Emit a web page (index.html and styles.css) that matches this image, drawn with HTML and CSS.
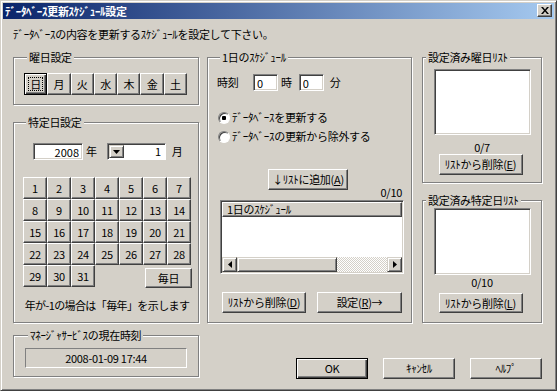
FILE: index.html
```html
<!DOCTYPE html>
<html lang="ja">
<head>
    <meta charset="UTF-8">
    <title>ﾃﾞｰﾀﾍﾞｰｽ更新ｽｹｼﾞｭｰﾙ設定</title>
    <link rel="stylesheet" href="styles.css">
</head>
<body>
    <div class="window">
        <div class="titlebar">
            <span class="title">ﾃﾞｰﾀﾍﾞｰｽ更新ｽｹｼﾞｭｰﾙ設定</span>
            <button class="btn close-btn">
                <svg width="8" height="7" viewBox="0 0 8 7"><path d="M0 0h2l2 2.4L6 0h2L5 3.5 8 7H6L4 4.6 2 7H0l3-3.5z" fill="#000"/></svg>
            </button>
        </div>
        <div class="client">
            <p class="desc">ﾃﾞｰﾀﾍﾞｰｽの内容を更新するｽｹｼﾞｭｰﾙを設定して下さい。</p>
            <div class="layout">
                <div class="col-left">
                    <fieldset class="group group-week">
                        <legend>曜日設定</legend>
                        <div class="week-buttons">
                            <button class="btn btn-default is-focused">日</button>
                            <button class="btn">月</button>
                            <button class="btn">火</button>
                            <button class="btn">水</button>
                            <button class="btn">木</button>
                            <button class="btn">金</button>
                            <button class="btn">土</button>
                        </div>
                    </fieldset>
                    <fieldset class="group group-date">
                        <legend>特定日設定</legend>
                        <div class="date-row">
                            <input class="field year-field" type="text" value="2008">
                            <span class="unit unit-year">年</span>
                            <div class="combo">
                                <span class="combo-arrow">
                                    <svg width="7" height="4" viewBox="0 0 7 4"><path d="M0 0h7L3.5 4z" fill="#000"/></svg>
                                </span>
                                <span class="combo-value">1</span>
                            </div>
                            <span class="unit unit-month">月</span>
                        </div>
                        <div class="calendar">
                            <button class="btn">1</button>
                            <button class="btn">2</button>
                            <button class="btn">3</button>
                            <button class="btn">4</button>
                            <button class="btn">5</button>
                            <button class="btn">6</button>
                            <button class="btn">7</button>
                            <button class="btn">8</button>
                            <button class="btn">9</button>
                            <button class="btn">10</button>
                            <button class="btn">11</button>
                            <button class="btn">12</button>
                            <button class="btn">13</button>
                            <button class="btn">14</button>
                            <button class="btn">15</button>
                            <button class="btn">16</button>
                            <button class="btn">17</button>
                            <button class="btn">18</button>
                            <button class="btn">19</button>
                            <button class="btn">20</button>
                            <button class="btn">21</button>
                            <button class="btn">22</button>
                            <button class="btn">23</button>
                            <button class="btn">24</button>
                            <button class="btn">25</button>
                            <button class="btn">26</button>
                            <button class="btn">27</button>
                            <button class="btn">28</button>
                            <button class="btn">29</button>
                            <button class="btn">30</button>
                            <button class="btn">31</button>
                            <button class="btn everyday-btn">毎日</button>
                        </div>
                        <p class="note">年が-1の場合は「毎年」を示します</p>
                    </fieldset>
                    <fieldset class="group group-clock">
                        <legend>ﾏﾈｰｼﾞｬｻｰﾋﾞｽの現在時刻</legend>
                        <div class="status">2008-01-09 17:44</div>
                    </fieldset>
                </div>

                <div class="col-main">
                    <div class="col-main-top">
                        <fieldset class="group group-daily">
                            <legend>1日のｽｹｼﾞｭｰﾙ</legend>
                            <div class="time-row">
                                <span class="time-label">時刻</span>
                                <input class="field time-field" type="text" value="0">
                                <span class="unit unit-hour">時</span>
                                <input class="field time-field" type="text" value="0">
                                <span class="unit unit-min">分</span>
                            </div>
                            <div class="radios">
                                <label class="radio-row"><input class="radio" type="radio" name="mode" checked>ﾃﾞｰﾀﾍﾞｰｽを更新する</label>
                                <label class="radio-row"><input class="radio" type="radio" name="mode">ﾃﾞｰﾀﾍﾞｰｽの更新から除外する</label>
                            </div>
                            <button class="btn add-btn">↓ﾘｽﾄに追加(<u>A</u>)</button>
                            <div class="counter daily-counter">0/10</div>
                            <div class="listview">
                                <div class="listview-header">1日のｽｹｼﾞｭｰﾙ</div>
                                <div class="listview-body"></div>
                                <div class="hscroll">
                                    <span class="sb-btn">
                                        <svg width="4" height="7" viewBox="0 0 4 7"><path d="M4 0v7L0 3.5z" fill="#000"/></svg>
                                    </span>
                                    <span class="sb-thumb"></span>
                                    <span class="sb-track"></span>
                                    <span class="sb-btn">
                                        <svg width="4" height="7" viewBox="0 0 4 7"><path d="M0 0v7l4-3.5z" fill="#000"/></svg>
                                    </span>
                                </div>
                            </div>
                            <div class="daily-actions">
                                <button class="btn remove-daily">ﾘｽﾄから削除(<u>D</u>)</button>
                                <button class="btn set-btn">設定(<u>R</u>)→</button>
                            </div>
                        </fieldset>

                        <div class="col-right">
                            <fieldset class="group group-list group-list-week">
                                <legend>設定済み曜日ﾘｽﾄ</legend>
                                <div class="listbox"></div>
                                <div class="counter">0/7</div>
                                <button class="btn list-remove">ﾘｽﾄから削除(<u>E</u>)</button>
                            </fieldset>
                            <fieldset class="group group-list group-list-date">
                                <legend>設定済み特定日ﾘｽﾄ</legend>
                                <div class="listbox"></div>
                                <div class="counter">0/10</div>
                                <button class="btn list-remove">ﾘｽﾄから削除(<u>L</u>)</button>
                            </fieldset>
                        </div>
                    </div>

                    <div class="dialog-buttons">
                        <button class="btn btn-default dlg-btn">OK</button>
                        <button class="btn dlg-btn">ｷｬﾝｾﾙ</button>
                        <button class="btn dlg-btn">ﾍﾙﾌﾟ</button>
                    </div>
                </div>
            </div>
        </div>
    </div>
</body>
</html>
```

FILE: styles.css
```css
* {
    box-sizing: border-box;
}
body {
    margin: 0;
    font: 11px/13px "Noto Sans CJK JP", sans-serif;
    letter-spacing: -0.3px;
    color: #000;
    background: #d4d0c8;
}
p {
    margin: 0;
}

/* window frame */
.window {
    width: 557px;
    height: 391px;
    display: flex;
    flex-direction: column;
    padding: 2px;
    background: #d4d0c8;
    border: 1px solid;
    border-color: #d4d0c8 #404040 #404040 #d4d0c8;
    box-shadow: inset 1px 1px #fff, inset -1px -1px #808080;
}
.titlebar {
    height: 16px;
    display: flex;
    align-items: flex-start;
    justify-content: space-between;
    padding: 0 2px 0 2px;
    background: linear-gradient(90deg, #0a246a 0%, #a6caf0 100%);
}
.title {
    color: #fff;
    font-weight: bold;
    line-height: 16px;
}
.close-btn {
    width: 15px;
    height: 13px;
    margin-top: 1px;
}
.client {
    flex: 1;
    padding: 9px 0 0 10px;
}
.desc {
    margin-bottom: 10px;
}
.layout {
    display: flex;
    gap: 8px;
}

/* buttons and fields */
.btn {
    font: inherit;
    letter-spacing: inherit;
    color: #000;
    background: #d4d0c8;
    padding: 0;
    display: flex;
    align-items: center;
    justify-content: center;
    border: 1px solid;
    border-color: #fff #404040 #404040 #fff;
    box-shadow: inset -1px -1px #808080;
    white-space: nowrap;
}
.btn u {
    text-decoration: underline;
}
.btn-default {
    border-color: #000;
    box-shadow: inset 1px 1px #fff, inset -1px -1px #404040, inset -2px -2px #808080;
}
.is-focused {
    outline: 1px dotted #000;
    outline-offset: -5px;
}
.field {
    font: inherit;
    color: #000;
    background: #fff;
    border: 1px solid;
    border-color: #808080 #fff #fff #808080;
    box-shadow: inset 1px 1px #404040, inset -1px -1px #d4d0c8;
    padding: 0 3px;
    outline: none;
}

/* group boxes */
.group {
    margin: 0;
    min-width: 0;
    padding: 0;
    border: 1px solid #808080;
    box-shadow: inset 1px 1px #fff, 1px 1px #fff;
}
.group legend {
    margin-left: 3px;
    padding: 0 2px;
    background: #d4d0c8;
    line-height: 13px;
}

/* left column */
.col-left {
    width: 186px;
    display: flex;
    flex-direction: column;
}
.group-week {
    height: 54px;
    padding: 9px 0 0 10px;
}
.week-buttons {
    width: 163px;
    height: 22px;
    display: grid;
    grid-template-columns: repeat(7, 1fr);
}
.group-date {
    height: 207px;
    margin-top: 11px;
    padding: 14px 0 0 9px;
}
.date-row {
    display: flex;
    align-items: center;
    margin-left: 10px;
    height: 17px;
}
.year-field {
    width: 50px;
    height: 17px;
    text-align: right;
}
.unit-year {
    margin: 0 10px 0 3px;
}
.combo {
    width: 59px;
    height: 17px;
    display: flex;
    background: #fff;
    border: 1px solid;
    border-color: #808080 #fff #fff #808080;
    box-shadow: inset 1px 1px #404040;
    padding: 1px 1px 1px 1px;
}
.combo-arrow {
    width: 15px;
    display: flex;
    align-items: center;
    justify-content: center;
    background: #d4d0c8;
    border: 1px solid;
    border-color: #d4d0c8 #404040 #404040 #d4d0c8;
    box-shadow: inset 1px 1px #fff, inset -1px -1px #808080;
}
.combo-value {
    flex: 1;
    text-align: right;
    padding-right: 3px;
}
.unit-month {
    margin-left: 6px;
}
.calendar {
    margin-top: 17px;
    width: 168px;
    display: grid;
    grid-template-columns: repeat(7, 24px);
    grid-auto-rows: 22px;
}
.everyday-btn {
    grid-column: 6 / span 2;
    justify-self: end;
    width: 47px;
    height: 20px;
    margin: 3px -1px 0 0;
}
.note {
    width: 168px;
    margin-top: 12px;
    display: flex;
    justify-content: center;
    white-space: nowrap;
    letter-spacing: -0.6px;
}
.group-clock {
    height: 48px;
    margin-top: 6px;
    padding: 6px 0 0 11px;
}
.status {
    width: 162px;
    height: 20px;
    line-height: 18px;
    text-align: center;
    border: 1px solid;
    border-color: #808080 #fff #fff #808080;
}

/* main column */
.col-main {
    width: 335px;
    display: flex;
    flex-direction: column;
}
.col-main-top {
    display: flex;
    gap: 10px;
}
.group-daily {
    width: 205px;
    height: 272px;
    padding: 10px 0 0 9px;
}
.time-row {
    display: flex;
    align-items: center;
    height: 17px;
}
.time-label {
    width: 36px;
}
.time-field {
    width: 25px;
    height: 17px;
}
.unit-hour {
    margin: 0 7px 0 3px;
}
.unit-min {
    margin-left: 6px;
}
.radios {
    margin-top: 20px;
    display: flex;
    flex-direction: column;
    gap: 6px;
}
.radio-row {
    display: flex;
    align-items: center;
    height: 13px;
    padding-left: 1px;
}
.radio {
    appearance: none;
    width: 12px;
    height: 12px;
    margin: 0 2px 0 0;
    border-radius: 50%;
    border: 1px solid;
    border-color: #808080 #fff #fff #808080;
    box-shadow: inset 1px 1px #404040;
    background: #fff;
}
.radio:checked {
    background: radial-gradient(circle, #000 0 2px, #fff 2.5px);
}
.add-btn {
    margin: 26px 0 0 51px;
    width: 80px;
    height: 21px;
}
.counter {
    text-align: center;
    line-height: 13px;
}
.daily-counter {
    width: 182px;
    margin: -4px 0 0 3px;
    text-align: right;
}
.listview {
    width: 184px;
    height: 74px;
    margin: 1px 0 0 3px;
    display: flex;
    flex-direction: column;
    background: #fff;
    border: 1px solid;
    border-color: #808080 #fff #fff #808080;
    box-shadow: inset 1px 1px #404040, inset -1px -1px #d4d0c8;
    padding: 1px;
}
.listview-header {
    height: 15px;
    line-height: 13px;
    padding-left: 4px;
    background: #d4d0c8;
    border: 1px solid;
    border-color: #fff #404040 #404040 #fff;
    box-shadow: inset -1px -1px #808080;
}
.listview-body {
    flex: 1;
}
.hscroll {
    height: 15px;
    display: flex;
}
.sb-btn,
.sb-thumb {
    display: flex;
    align-items: center;
    justify-content: center;
    background: #d4d0c8;
    border: 1px solid;
    border-color: #d4d0c8 #404040 #404040 #d4d0c8;
    box-shadow: inset 1px 1px #fff, inset -1px -1px #808080;
}
.sb-btn {
    width: 15px;
}
.sb-thumb {
    width: 100px;
}
.sb-track {
    flex: 1;
    background: repeating-conic-gradient(#fff 0 25%, #d4d0c8 0 50%) 0 0 / 2px 2px;
}
.daily-actions {
    display: flex;
    gap: 11px;
    margin: 18px 0 0 5px;
}
.remove-daily {
    width: 84px;
    height: 21px;
}
.set-btn {
    width: 85px;
    height: 21px;
}

/* right column */
.col-right {
    width: 120px;
    display: flex;
    flex-direction: column;
    gap: 11px;
}
.group-list {
    display: flex;
    flex-direction: column;
    align-items: center;
}
.group-list-week {
    height: 132px;
    padding-top: 5px;
}
.group-list-date {
    height: 129px;
    padding-top: 1px;
}
.listbox {
    width: 97px;
    height: 66px;
    background: #fff;
    border: 1px solid;
    border-color: #808080 #fff #fff #808080;
    box-shadow: inset 1px 1px #404040, inset -1px -1px #d4d0c8;
}
.group-list-date .listbox {
    height: 67px;
}
.group-list-week .counter {
    margin-top: 6px;
}
.group-list-date .counter {
    margin-top: 1px;
}
.list-remove {
    width: 84px;
    height: 21px;
    margin-left: -3px;
}
.group-list-date .list-remove {
    margin-top: 4px;
    height: 20px;
}

/* OK / cancel / help */
.dialog-buttons {
    display: flex;
    justify-content: flex-end;
    gap: 15px;
    margin-top: 35px;
}
.dlg-btn {
    width: 72px;
    height: 21px;
}
```
